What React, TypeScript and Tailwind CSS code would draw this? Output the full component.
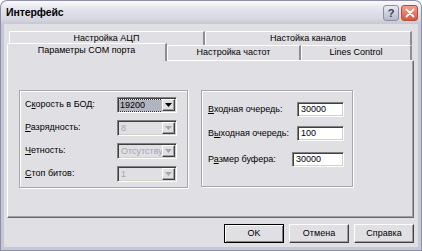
import React from 'react';

const font = { fontFamily: '"Liberation Sans", Arial, sans-serif' };

function Combo({ value, enabled, selected }: { value: string; enabled?: boolean; selected?: boolean }) {
  return (
    <div
      className={`w-[60px] h-[16px] flex items-stretch border border-t-[#808080] border-l-[#808080] border-b-white border-r-white shadow-[inset_1px_1px_0_#404040,inset_-1px_-1px_0_#d4d0c8] ${
        enabled ? 'bg-white' : 'bg-[#e0dfe3]'
      }`}
    >
      <div className="flex-1 flex items-center pl-[1px] pt-px overflow-hidden">
        {selected ? (
          <span className="h-[11px] w-full flex items-center pl-px bg-[#b2b4bf] outline-1 outline-dotted outline-[#333] text-black">
            {value}
          </span>
        ) : (
          <span className={`whitespace-nowrap pl-[2px] ${enabled ? 'text-black' : 'text-[#a7a6aa]'}`}>{value}</span>
        )}
      </div>
      <div className="w-[13px] my-[1px] mr-[1px] flex items-center justify-center bg-[#e0dfe3] border border-t-white border-l-white border-b-[#404040] border-r-[#404040] shadow-[inset_-1px_-1px_0_#9d9da1]">
        <svg width="7" height="4" viewBox="0 0 7 4">
          <path d="M0 0h7L3.5 4z" fill={enabled ? '#000' : '#a7a6aa'} />
        </svg>
      </div>
    </div>
  );
}

function Edit({ value, w }: { value: string; w: string }) {
  return (
    <div
      className={`${w} h-[15px] bg-white flex items-center pl-[3px] border border-t-[#808080] border-l-[#808080] border-b-white border-r-white shadow-[inset_1px_1px_0_#404040,inset_-1px_-1px_0_#d4d0c8] text-black`}
    >
      {value}
    </div>
  );
}

function Button({ label, def }: { label: string; def?: boolean }) {
  return (
    <div
      className={`w-[60px] h-[19px] flex items-center justify-center bg-[#e0dfe3] ${
        def
          ? 'border border-black shadow-[inset_1px_1px_0_#fff,inset_-1px_-1px_0_#808080]'
          : 'border border-t-white border-l-white border-b-[#404040] border-r-[#404040] shadow-[inset_-1px_-1px_0_#9d9da1]'
      }`}
    >
      {label}
    </div>
  );
}

export default function App() {
  return (
    <div className="w-[422px] h-[251px] flex flex-col bg-[#8e8fa6] p-px rounded-t-[7px] text-[9px] text-black" style={font}>
      {/* title bar */}
      <div className="h-[23px] flex items-center pl-[5px] pr-[3px] rounded-t-[6px] bg-[linear-gradient(to_bottom,#fbfbfd_0%,#e6e6ee_30%,#d6d6e0_80%,#c7c7d3_100%)]">
        <span className="font-bold text-[10.5px] tracking-[-0.1px]">Интерфейс</span>
        <div className="ml-auto flex items-center gap-[2px] pt-[1px]">
          <div className="w-[16px] h-[16px] rounded-[3px] border border-[#8a8da6] bg-[linear-gradient(to_bottom,#e8e9f2,#b5b8cc)] flex items-center justify-center text-[11px] font-bold text-[#3b3d52] leading-none">
            ?
          </div>
          <div className="w-[17px] h-[16px] rounded-[3px] border border-[#b04f3f] bg-[linear-gradient(to_bottom,#f0a090,#d8553f)] flex items-center justify-center">
            <svg width="10" height="10" viewBox="0 0 10 10">
              <path d="M1.5 1.5l7 7M8.5 1.5l-7 7" stroke="#fff" strokeWidth="1.8" strokeLinecap="round" />
            </svg>
          </div>
        </div>
      </div>

      {/* body */}
      <div className="flex-1 flex flex-col bg-[#e0dfe3] border-x-[3px] border-b-[3px] border-[#c6c6d6] pt-[7px] pl-[3px] pr-[4px] pb-[4px]">
        {/* back tab row */}
        <div className="h-[14px] flex ml-[2px] mr-[2px]">
          <div className="w-[196px] flex items-center justify-center border-t border-l border-white border-r-2 border-r-[#8d8d92] rounded-tl-[2px]">
            Настройка АЦП
          </div>
          <div className="flex-1 flex items-center justify-center border-t border-l border-white border-r-2 border-r-[#8d8d92] rounded-tl-[2px]">
            Настойка каналов
          </div>
        </div>
        {/* front tab row */}
        <div className="h-[15px] flex items-end mr-[2px]">
          <div className="relative z-10 -mb-px w-[160px] h-[18px] pb-[3px] flex items-center justify-center bg-[#e0dfe3] border-t border-l border-white border-r-2 border-r-[#8d8d92] rounded-tl-[2px]">
            Параметры COM порта
          </div>
          <div className="w-[134px] h-[15px] flex items-center justify-center border-t border-l border-white border-r-2 border-r-[#8d8d92] rounded-tl-[2px]">
            Настройка частот
          </div>
          <div className="flex-1 h-[15px] flex items-center justify-center border-t border-l border-white border-r-2 border-r-[#8d8d92] rounded-tl-[2px]">
            Lines Control
          </div>
        </div>

        {/* panel */}
        <div className="h-[158px] flex items-start gap-[13px] pt-[29px] pl-[11px] border border-t-white border-l-white border-r-[#6a6a6e] border-b-[#6a6a6e] shadow-[inset_-1px_-1px_0_#a0a0a4]">
          {/* left group */}
          <div className="w-[169px] h-[98px] flex flex-col gap-[7px] pt-[6px] pl-[5px] pr-[10px] border border-[#a7a6aa] shadow-[inset_1px_1px_0_#fff,1px_1px_0_#fff]">
            <div className="flex items-center justify-between">
              <span>С<u>к</u>орость в БОД:</span>
              <Combo value="19200" enabled selected />
            </div>
            <div className="flex items-center justify-between">
              <span><u>Р</u>азрядность:</span>
              <Combo value="8" />
            </div>
            <div className="flex items-center justify-between">
              <span><u>Ч</u>етность:</span>
              <Combo value="Отсутствует" />
            </div>
            <div className="flex items-center justify-between">
              <span><u>С</u>топ битов:</span>
              <Combo value="1" />
            </div>
          </div>

          {/* right group */}
          <div className="w-[152px] h-[97px] flex flex-col pl-[6px] pr-[8px] border border-[#a7a6aa] shadow-[inset_1px_1px_0_#fff,1px_1px_0_#fff]">
            <div className="mt-[11px] flex items-center justify-between">
              <span><u>В</u>ходная очередь:</span>
              <Edit value="30000" w="w-[47px]" />
            </div>
            <div className="mt-[9px] flex items-center justify-between">
              <span>В<u>ы</u>ходная очередь:</span>
              <Edit value="100" w="w-[47px]" />
            </div>
            <div className="mt-[11px] flex items-center justify-between">
              <span>Р<u>а</u>змер буфера:</span>
              <Edit value="30000" w="w-[52px]" />
            </div>
          </div>
        </div>

        {/* buttons */}
        <div className="mt-[6px] flex justify-end gap-[5px]">
          <Button label="OK" def />
          <Button label="Отмена" />
          <Button label="Справка" />
        </div>
      </div>
    </div>
  );
}
